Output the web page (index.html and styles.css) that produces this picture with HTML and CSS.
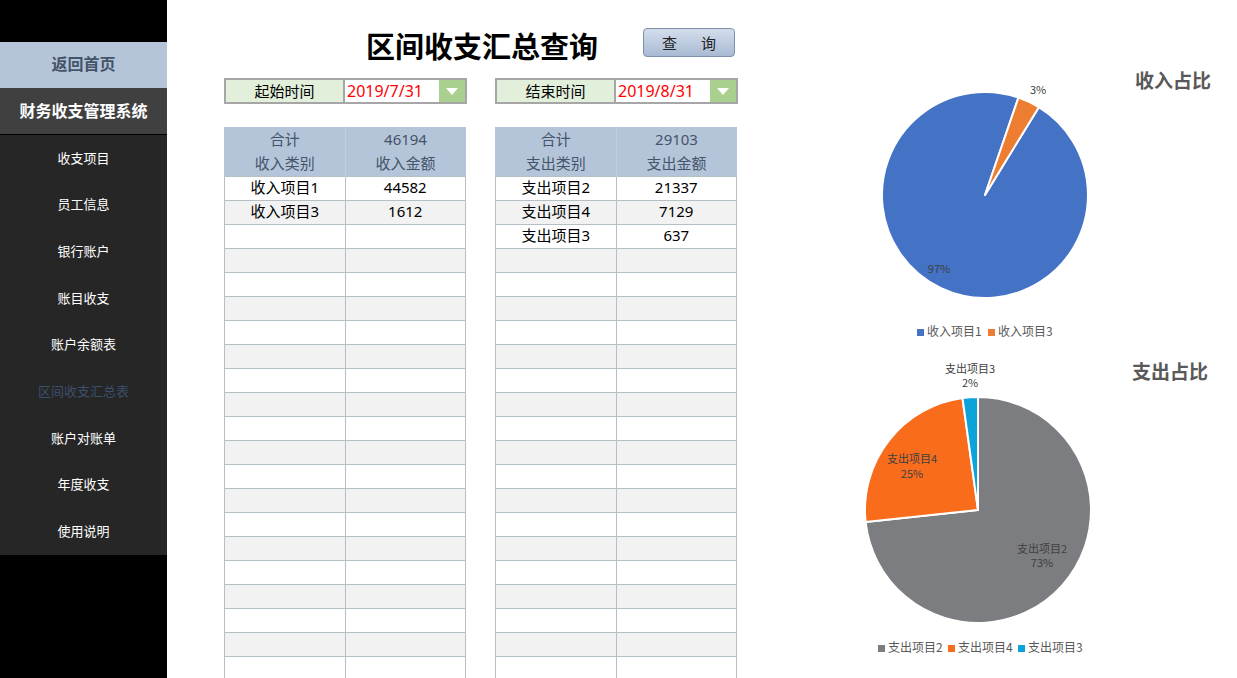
FILE: index.html
```html
<!DOCTYPE html>
<html lang="zh-CN">
<head>
  <meta charset="UTF-8">
  <title>区间收支汇总查询</title>
  <link rel="stylesheet" href="styles.css">
</head>
<body>
  <aside class="sidebar">
    <div class="home">返回首页</div>
    <div class="sys-name">财务收支管理系统</div>
    <nav class="menu">
      <a>收支项目</a>
      <a>员工信息</a>
      <a>银行账户</a>
      <a>账目收支</a>
      <a>账户余额表</a>
      <a class="active">区间收支汇总表</a>
      <a>账户对账单</a>
      <a>年度收支</a>
      <a>使用说明</a>
    </nav>
  </aside>

  <main class="main">
    <section class="report">
      <div class="head">
        <h1>区间收支汇总查询</h1>
        <button class="btn-query"><span>查</span><span>询</span></button>
      </div>

      <div class="pair dates">
        <div class="date">
          <div class="date-label">起始时间</div>
          <div class="date-value">2019/7/31</div>
          <div class="date-drop"></div>
        </div>
        <div class="date">
          <div class="date-label">结束时间</div>
          <div class="date-value">2019/8/31</div>
          <div class="date-drop"></div>
        </div>
      </div>

      <div class="pair">
        <table class="sheet">
          <thead>
            <tr><th>合计</th><th>46194</th></tr>
            <tr><th>收入类别</th><th>收入金额</th></tr>
          </thead>
          <tbody id="incomeBody">
            <tr><td>收入项目1</td><td>44582</td></tr>
            <tr><td>收入项目3</td><td>1612</td></tr>
          </tbody>
        </table>
        <table class="sheet">
          <thead>
            <tr><th>合计</th><th>29103</th></tr>
            <tr><th>支出类别</th><th>支出金额</th></tr>
          </thead>
          <tbody id="expenseBody">
            <tr><td>支出项目2</td><td>21337</td></tr>
            <tr><td>支出项目4</td><td>7129</td></tr>
            <tr><td>支出项目3</td><td>637</td></tr>
          </tbody>
        </table>
      </div>
    </section>

    <section class="charts">
      <div class="chart">
        <svg width="270" height="275" class="pie">
          <path d="M135,125 L188.82,37.18 A103,103 0 1 1 168.43,27.57 Z" fill="#4472c4"/>
          <path d="M135,125 L168.43,27.57 A103,103 0 0 1 188.82,37.18 Z" fill="#ed7d31"/>
          <text x="188" y="24" text-anchor="middle">3%</text>
          <text x="89" y="203" text-anchor="middle">97%</text>
          <g class="legend">
            <rect x="67" y="259" width="7" height="7" fill="#4472c4"/>
            <text x="77" y="266">收入项目1</text>
            <rect x="138" y="259" width="7" height="7" fill="#ed7d31"/>
            <text x="148" y="266">收入项目3</text>
          </g>
        </svg>
        <h2 class="chart-title">收入占比</h2>
      </div>

      <div class="chart chart-out">
        <svg width="270" height="317" class="pie">
          <path d="M128,149 L128,36 A113,113 0 1 1 15.63,160.95 Z" fill="#7c7d80"/>
          <path d="M128,149 L15.63,160.95 A113,113 0 0 1 112.51,37.07 Z" fill="#f96c1c"/>
          <path d="M128,149 L112.51,37.07 A113,113 0 0 1 128,36 Z" fill="#0ca3db"/>
          <text x="120" y="12" text-anchor="middle">支出项目3</text>
          <text x="120" y="26" text-anchor="middle">2%</text>
          <text x="62" y="102" text-anchor="middle">支出项目4</text>
          <text x="62" y="117" text-anchor="middle">25%</text>
          <text x="192" y="192" text-anchor="middle">支出项目2</text>
          <text x="192" y="206" text-anchor="middle">73%</text>
          <g class="legend">
            <rect x="28" y="284" width="7" height="7" fill="#7c7d80"/>
            <text x="38" y="291">支出项目2</text>
            <rect x="98" y="284" width="7" height="7" fill="#f96c1c"/>
            <text x="108" y="291">支出项目4</text>
            <rect x="168" y="284" width="7" height="7" fill="#0ca3db"/>
            <text x="178" y="291">支出项目3</text>
          </g>
        </svg>
        <h2 class="chart-title">支出占比</h2>
      </div>
    </section>
  </main>

  <script>
    ['incomeBody', 'expenseBody'].forEach(id => {
      const tb = document.getElementById(id);
      while (tb.rows.length < 22) {
        const tr = document.createElement('tr');
        tr.innerHTML = '<td></td><td></td>';
        tb.append(tr);
      }
    });
  </script>
</body>
</html>
```

FILE: styles.css
```css
* { box-sizing: border-box; margin: 0; padding: 0; }
html, body { height: 100%; }
body { display: flex; overflow: hidden; background: #fff; font-family: "Noto Sans", "Noto Sans CJK SC", sans-serif; color: #000; }

/* sidebar */
.sidebar { width: 167px; flex: none; height: 100vh; background: #000; padding-top: 42px; }
.home { height: 46px; padding-bottom: 5px; background: #b5c5d9; color: #44546a; font-size: 16px; font-weight: bold; display: flex; align-items: center; justify-content: center; }
.sys-name { height: 47px; padding-bottom: 2px; background: #404040; color: #fff; font-size: 16px; font-weight: bold; display: flex; align-items: center; justify-content: center; border-bottom: 1px solid #000; }
.menu { height: 420px; background: #262626; display: grid; grid-template-rows: repeat(9, 1fr); }
.menu a { padding-bottom: 2px; color: #fff; font-size: 13px; display: flex; align-items: center; justify-content: center; cursor: pointer; }
.menu a.active { color: #3c4f6c; }

/* main */
.main { flex: 1; display: flex; }
.report { width: 683px; flex: none; padding: 28px 0 0 57px; }
.head { display: flex; align-items: flex-start; margin-bottom: 12px; height: 38px; }
.head h1 { margin: -2px 0 0 142px; font-size: 29px; line-height: 38px; font-weight: bold; font-family: "Noto Sans CJK SC", sans-serif; }
.btn-query { margin-left: 45px; width: 92px; height: 29px; padding-bottom: 1px; border: 1px solid #7d91ad; border-radius: 4px; background: linear-gradient(#d3deec, #a8bad3); display: flex; align-items: center; justify-content: center; gap: 24px; font-size: 15px; color: #222; font-family: "Noto Sans CJK SC", sans-serif; cursor: pointer; }

.pair { display: grid; grid-template-columns: 243px 243px; column-gap: 28px; }
.dates { margin-bottom: 23px; }
.date { display: flex; height: 26px; border: 2px solid #a6a6a6; }
.date-label { width: 119px; padding-bottom: 2px; background: #e2efda; border-right: 2px solid #a6a6a6; font-size: 15px; display: flex; align-items: center; justify-content: center; }
.date-value { flex: 1; padding: 0 0 1px 2px; color: #ff0000; font-size: 16px; display: flex; align-items: center; }
.date-drop { width: 26px; background: #a9d08e; display: flex; align-items: center; justify-content: center; }
.date-drop::after { content: ""; border-left: 6px solid transparent; border-right: 6px solid transparent; border-top: 7px solid #fff; }

.sheet { width: 242px; border-collapse: collapse; table-layout: fixed; font-size: 15px; }
.sheet th, .sheet td { height: 24px; padding: 0 0 2px; text-align: center; font-weight: normal; line-height: 20px; }
.sheet th { background: #b5c5d9; color: #44546a; border-left: 1px solid #c3cfdf; }
.sheet th:first-child { border-left: 1px solid #b5c5d9; }
.sheet thead tr:first-child th { height: 25px; }
.sheet td { border: 1px solid #b4c0c4; }
.sheet tbody tr:nth-child(even) td { background: #f2f2f2; }

/* charts */
.charts { padding-top: 70px; display: flex; flex-direction: column; gap: 16px; }
.chart { display: flex; align-items: flex-start; }
.chart-title { margin: -1px 0 0 15px; font-size: 19px; line-height: 22px; font-weight: bold; color: #595959; font-family: "Noto Sans CJK SC", sans-serif; }
.chart-out .chart-title { margin-left: 12px; }
.pie { overflow: visible; }
.pie path { stroke: #fff; stroke-width: 2; stroke-linejoin: round; }
.pie text { font-size: 11px; fill: #404040; font-family: "Noto Sans CJK SC", sans-serif; }
.pie .legend text { font-size: 12px; fill: #595959; }
```
